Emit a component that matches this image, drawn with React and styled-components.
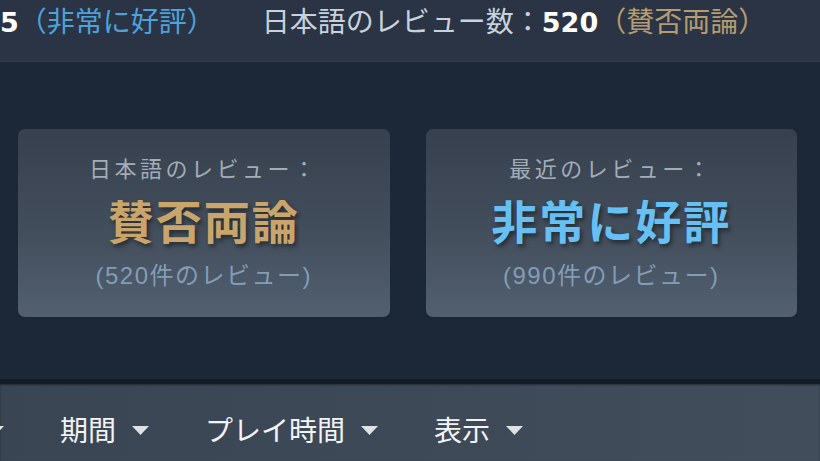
import React from 'react'
import styled, { createGlobalStyle } from 'styled-components'

const Global = createGlobalStyle`
  html, body {
    margin: 0;
    padding: 0;
    background: #1c2737;
    overflow: hidden;
  }
  body {
    font-family: "Noto Sans CJK JP", "Noto Sans", sans-serif;
  }
`

// first one only shows its caret at the left edge
const filters = ['', '期間', 'プレイ時間', '表示']

const summaries = [
  { label: '日本語のレビュー：', rating: '賛否両論', tone: 'mixed', count: 520 },
  { label: '最近のレビュー：', rating: '非常に好評', tone: 'positive', count: 990 },
]

const App = () => {
  return (
    <Page>
      <Global />
      <TopBar>
        <Num>5</Num>
        <Rating $tone="positive">（非常に好評）</Rating>
        <Spacer />
        <Label>日本語のレビュー数：</Label>
        <Num>520</Num>
        <Rating $tone="mixed">（賛否両論）</Rating>
      </TopBar>

      <Main>
        {summaries.map((s) => (
          <Card key={s.label}>
            <CardLabel>{s.label}</CardLabel>
            <Big $tone={s.tone}>{s.rating}</Big>
            <Count>({s.count}件のレビュー)</Count>
          </Card>
        ))}
      </Main>

      <FilterBar>
        <FilterRow>
          {filters.map((f, i) => (
            <Filter key={i}>
              {f}
              <Caret viewBox="0 0 17 9">
                <path d="M0 0 H17 L8.5 9 Z" />
              </Caret>
            </Filter>
          ))}
        </FilterRow>
      </FilterBar>
    </Page>
  )
}

const Page = styled.div`
  width: 820px;
  height: 461px;
  display: flex;
  flex-direction: column;
  background: #1c2737;
  overflow: hidden;
`

const TopBar = styled.div`
  height: 62px;
  flex-shrink: 0;
  display: flex;
  align-items: baseline;
  padding-top: 2px;
  box-sizing: border-box;
  background: #2a3444;
  border-bottom: 1px solid #333e4d;
  font-size: 28px;
  line-height: 36px;
  white-space: nowrap;
`

const Num = styled.span`
  font-family: "DejaVu Sans", "Noto Sans", sans-serif;
  font-weight: 700;
  color: #ffffff;
  font-size: 27px;
`

const Rating = styled.span`
  color: ${(p) => (p.$tone === 'positive' ? '#4ea2dc' : '#b69c6e')};
`

const Label = styled.span`
  color: #c7d2dc;
`

const Spacer = styled.span`
  width: 47px;
`

const Main = styled.div`
  flex: 1;
  display: flex;
  gap: 36px;
  padding: 67px 23px 0 18px;
  box-sizing: border-box;
`

const Card = styled.div`
  flex: 1;
  height: 188px;
  border-radius: 7px;
  background: linear-gradient(to bottom, #37414e 0%, #434e5c 55%, #526070 100%);
  display: flex;
  flex-direction: column;
  align-items: center;
  padding-top: 22px;
  box-sizing: border-box;
`

const CardLabel = styled.div`
  font-size: 22px;
  line-height: 32px;
  letter-spacing: 3.5px;
  color: #a3adb8;
`

const Big = styled.div`
  font-size: 46px;
  line-height: 62px;
  font-weight: 700;
  letter-spacing: 2px;
  margin-top: 5px;
  color: ${(p) => (p.$tone === 'positive' ? '#66c0f4' : '#c9a56b')};
  text-shadow: 2px 3px 4px rgba(0, 0, 0, 0.45);
`

const Count = styled.div`
  font-family: "Liberation Sans", "Noto Sans CJK JP", sans-serif;
  font-size: 24px;
  line-height: 34px;
  letter-spacing: 1.5px;
  color: #829db6;
  margin-top: 9px;
`

const FilterBar = styled.div`
  height: 82px;
  flex-shrink: 0;
  box-sizing: border-box;
  background: linear-gradient(to right, #3a4553, #414d5b);
  border-top: 5px solid #141b25;
  box-shadow: inset 0 1px 2px rgba(0, 0, 0, 0.4);
  padding-top: 27px;
  overflow: hidden;
`

const FilterRow = styled.div`
  display: flex;
  gap: 56px;
  margin-left: -13px;
`

const Filter = styled.div`
  display: flex;
  align-items: center;
  gap: 16px;
  font-size: 28px;
  line-height: 36px;
  color: #f2f4f6;
  white-space: nowrap;
`

const Caret = styled.svg`
  width: 17px;
  height: 9px;
  fill: #dde2e7;
  margin-top: 2px;
`

export default App
